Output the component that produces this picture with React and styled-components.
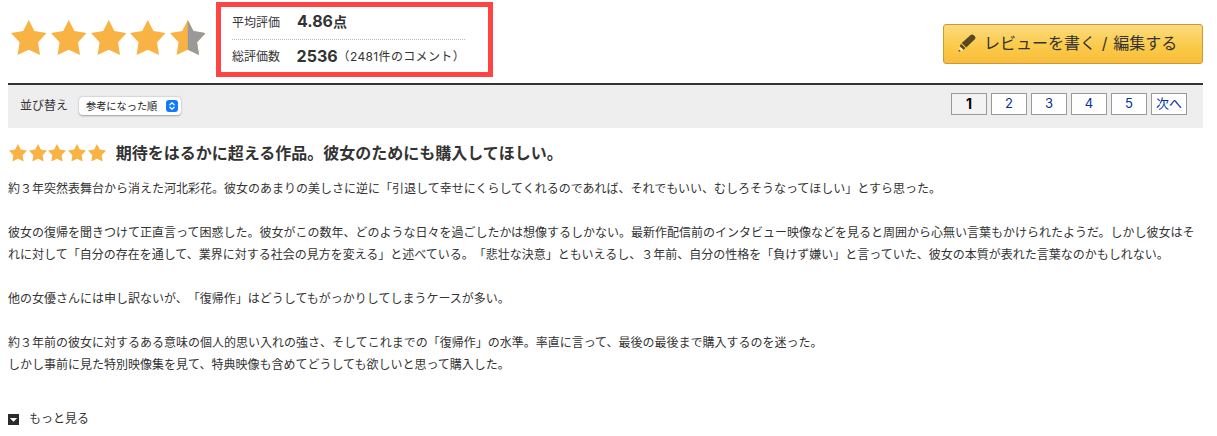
import React from "react";
import styled, { createGlobalStyle } from "styled-components";

const PAGES = ["1", "2", "3", "4", "5"];

const Star = ({ width, height, half }) => (
  <svg width={width} height={height} viewBox="0 0 108 105" preserveAspectRatio="none">
    <polygon
      fill="#f8b344"
      points="54,0 71,33 108,39 82,67 88,105 54,89 20,105 26,67 0,39 37,33"
    />
    {half && (
      <polygon fill="#999" points="54,0 71,33 108,39 82,67 88,105 54,89" />
    )}
  </svg>
);

const Pencil = () => (
  <svg width="18" height="18" viewBox="0 0 18 18">
    <path
      fill="#574722"
      d="M12.4 1.3Q13.9 0 15.4 1.1L16.8 2.3Q18.1 3.8 16.8 5.2L8.3 13.4L3.7 8.9Z"
    />
    <path fill="#574722" d="M3 9.7L7.4 14L5.6 16L1.7 12.6Z" />
    <path fill="#fdeebc" d="M1.7 12.6L5.6 16L.6 17.6Z" />
    <path fill="#574722" d="M1.1 15.4L2.9 16.9L.3 17.8Z" />
  </svg>
);

export default function App() {
  return (
    <Page>
      <GlobalStyle />
      <Header>
        <BigStars>
          {PAGES.map((n) => (
            <Star key={n} width={35.6} height={35} half={n === "5"} />
          ))}
        </BigStars>
        <Summary>
          <SummaryRow $divided>
            <Label>平均評価</Label>
            <Strong>
              4.86<Unit>点</Unit>
            </Strong>
          </SummaryRow>
          <SummaryRow>
            <Label>総評価数</Label>
            <Strong>2536</Strong>
            <Comments>（2481件のコメント）</Comments>
          </SummaryRow>
        </Summary>
        <WriteButton>
          <Pencil />
          <span>レビューを書く / 編集する</span>
        </WriteButton>
      </Header>

      <Toolbar>
        <SortLabel>並び替え</SortLabel>
        <Select>
          <SelectText>参考になった順</SelectText>
          <Arrows>
            <svg width="12" height="12" viewBox="0 0 12 12">
              <path
                d="M3.9 4.8L6 2.8L8.1 4.8M3.9 7.2L6 9.2L8.1 7.2"
                fill="none"
                stroke="#fff"
                strokeWidth="1.2"
                strokeLinecap="round"
                strokeLinejoin="round"
              />
            </svg>
          </Arrows>
        </Select>
        <Pager>
          {PAGES.map((page) => (
            <PageLink key={page} $current={page === "1"}>
              {page}
            </PageLink>
          ))}
          <PageLink>次へ</PageLink>
        </Pager>
      </Toolbar>

      <ReviewHead>
        <SmallStars>
          {PAGES.map((n) => (
            <Star key={n} width={18} height={17.5} />
          ))}
        </SmallStars>
        <Title>期待をはるかに超える作品。彼女のためにも購入してほしい。</Title>
      </ReviewHead>

      <Review>
        約３年突然表舞台から消えた河北彩花。彼女のあまりの美しさに逆に「引退して幸せにくらしてくれるのであれば、それでもいい、むしろそうなってほしい」とすら思った。
        <br />
        <br />
        彼女の復帰を聞きつけて正直言って困惑した。彼女がこの数年、どのような日々を過ごしたかは想像するしかない。最新作配信前のインタビュー映像などを見ると周囲から心無い言葉もかけられたようだ。しかし彼女はそれに対して「自分の存在を通して、業界に対する社会の見方を変える」と述べている。「悲壮な決意」ともいえるし、３年前、自分の性格を「負けず嫌い」と言っていた、彼女の本質が表れた言葉なのかもしれない。
        <br />
        <br />
        他の女優さんには申し訳ないが、「復帰作」はどうしてもがっかりしてしまうケースが多い。
        <br />
        <br />
        約３年前の彼女に対するある意味の個人的思い入れの強さ、そしてこれまでの「復帰作」の水準。率直に言って、最後の最後まで購入するのを迷った。
        <br />
        しかし事前に見た特別映像集を見て、特典映像も含めてどうしても欲しいと思って購入した。
      </Review>

      <More>
        <svg width="11" height="11" viewBox="0 0 11 11">
          <rect width="11" height="11" fill="#2b2b2b" />
          <path d="M1.8 4H9.2L5.5 7.8Z" fill="#fff" />
        </svg>
        <span>もっと見る</span>
      </More>
    </Page>
  );
}

const GlobalStyle = createGlobalStyle`
  body {
    margin: 0;
    background: #fff;
    color: #333;
    font-family: Inter, "Noto Sans CJK JP", sans-serif;
    font-size: 12px;
    text-spacing-trim: space-all;
  }

  * {
    box-sizing: border-box;
  }

  svg {
    display: block;
    flex: none;
  }
`;

const Page = styled.div`
  padding: 0 14px 0 8px;
`;

const Header = styled.div`
  display: flex;
  align-items: flex-start;
  height: 83px;
`;

const BigStars = styled.div`
  display: flex;
  gap: 4px;
  width: 208px;
  padding: 20px 0 0 3.4px;
`;

const Summary = styled.div`
  width: 277px;
  height: 75px;
  margin-top: 2px;
  padding: 0 23px 0 11px;
  border: 5px solid #ff4444;
`;

const SummaryRow = styled.div`
  display: flex;
  align-items: center;
  height: 33px;
  padding-bottom: ${(props) => (props.$divided ? 3 : 2)}px;
  border-bottom: ${(props) => (props.$divided ? "1px dotted #bbb" : "none")};
  white-space: nowrap;
`;

const Label = styled.span`
  width: 65px;
`;

const Strong = styled.strong`
  font-size: 16px;
  line-height: 22px;
`;

const Unit = styled.span`
  font-size: 14px;
`;

const Comments = styled.span`
  letter-spacing: 0.35px;
`;

const WriteButton = styled.button`
  display: flex;
  align-items: center;
  gap: 8px;
  width: 260px;
  height: 40px;
  margin: 24px 0 0 auto;
  padding: 0 0 3px 14px;
  border: 1px solid #cc9933;
  border-radius: 3px;
  background: linear-gradient(#fcdb7e, #fac945 60%, #f9bd3d);
  color: #333;
  font: 16px Inter, "Noto Sans CJK JP", sans-serif;
  word-spacing: 1.3px;
  white-space: nowrap;

  span {
    padding-bottom: 1px;
  }
`;

const Toolbar = styled.div`
  display: flex;
  align-items: flex-start;
  height: 45px;
  padding: 8px 16px 0 12px;
  border-top: 2px solid #333;
  background: #eee;
`;

const SortLabel = styled.span`
  width: 59px;
  line-height: 26px;
`;

const Select = styled.div`
  display: flex;
  align-items: center;
  justify-content: space-between;
  width: 102px;
  height: 18px;
  margin-top: 4px;
  padding: 0 3px 0 7px;
  border-radius: 4px;
  background: #fff;
  box-shadow: 0 0.5px 2px rgba(0, 0, 0, 0.35);
  color: #222;
  font-size: 10.2px;
  white-space: nowrap;
`;

const SelectText = styled.span`
  padding-bottom: 2px;
`;

const Arrows = styled.span`
  border-radius: 3px;
  background: #0f7bfa;
`;

const Pager = styled.div`
  display: flex;
  gap: 4px;
  margin-left: auto;
`;

const PageLink = styled.a`
  width: 36px;
  height: 22px;
  border: 1px solid #999;
  background: ${(props) => (props.$current ? "#f3f3f3" : "#fff")};
  color: ${(props) => (props.$current ? "#000" : "#039")};
  font-size: ${(props) => (props.$current ? 14 : 13)}px;
  font-weight: ${(props) => (props.$current ? 700 : 400)};
  line-height: 19px;
  text-align: center;
  white-space: nowrap;
`;

const ReviewHead = styled.div`
  display: flex;
  align-items: center;
  height: 50px;
`;

const SmallStars = styled.div`
  display: flex;
  gap: 1.7px;
  padding: 0 0 1px 1px;
  margin-right: 10px;
`;

const Title = styled.h2`
  margin: 0;
  padding-bottom: 1px;
  font-size: 16px;
  line-height: 24px;
`;

const Review = styled.p`
  margin: 0;
  line-height: 22px;
`;

const More = styled.div`
  display: flex;
  align-items: center;
  gap: 10px;
  margin-top: 32px;
  line-height: 22px;
`;
